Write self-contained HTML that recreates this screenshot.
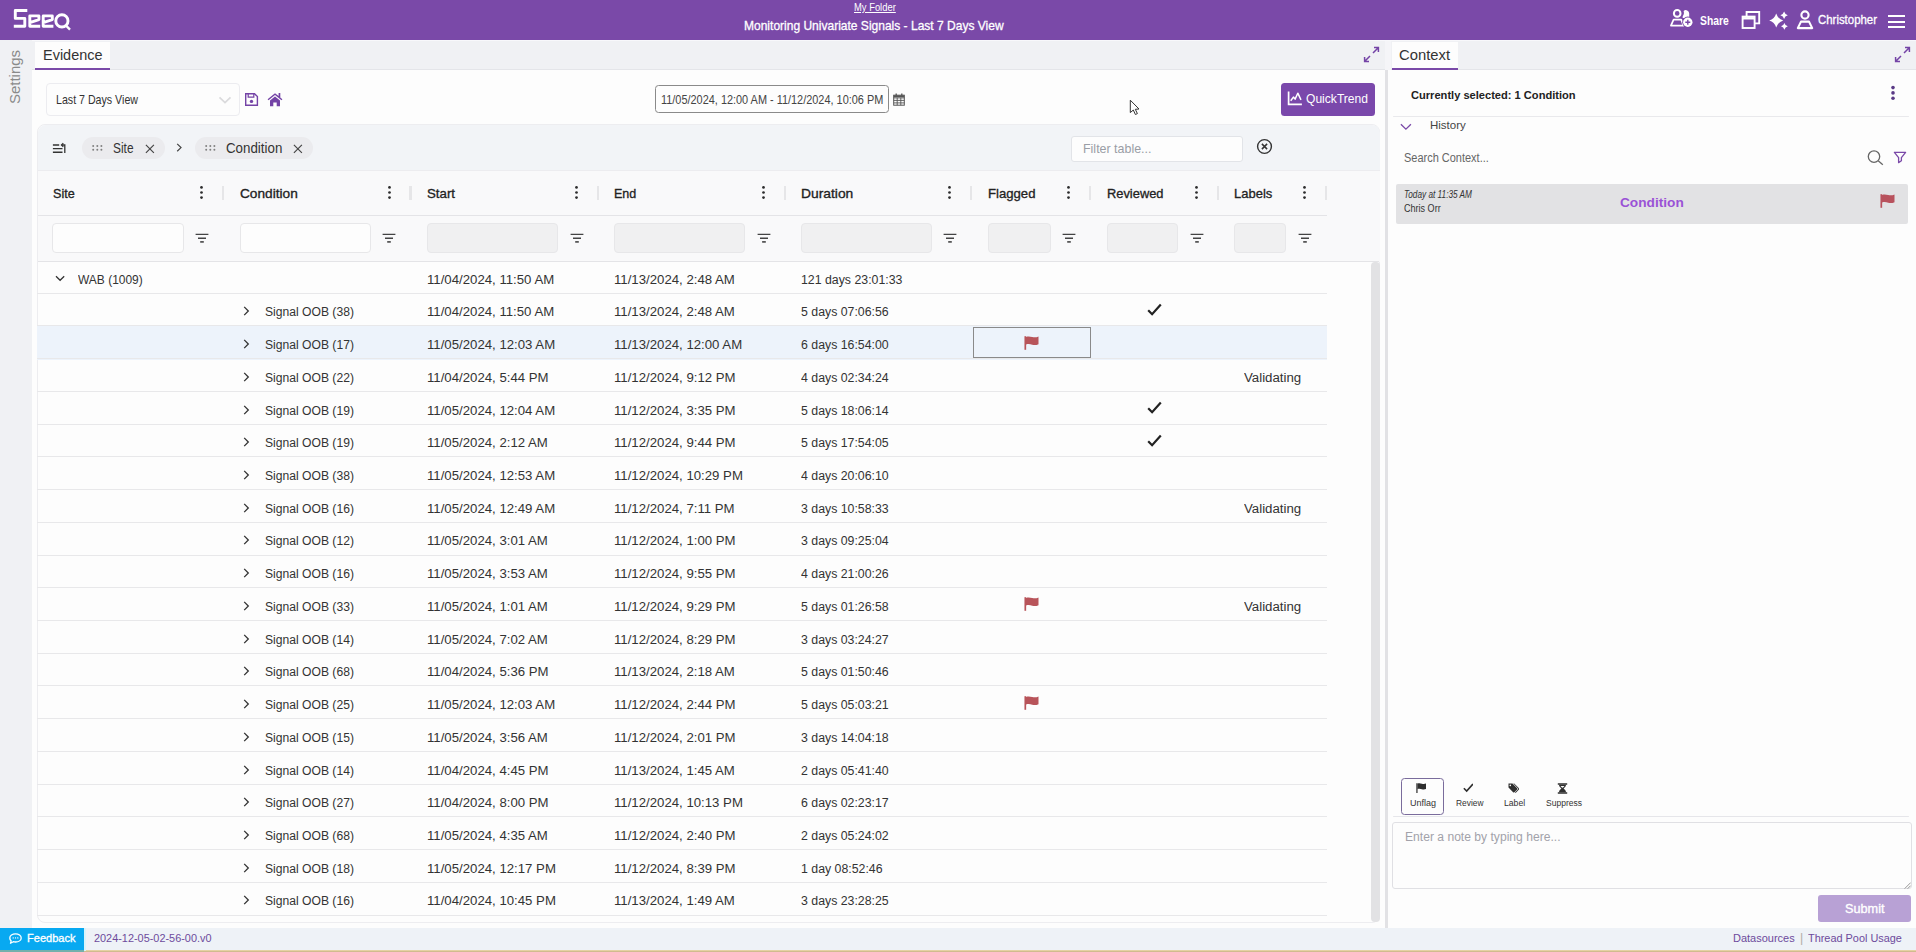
<!DOCTYPE html>
<html><head><meta charset="utf-8"><title>Seeq</title>
<style>
*{box-sizing:border-box;margin:0;padding:0}
html,body{width:1916px;height:952px;overflow:hidden;background:#f0f1f4;font-family:"Liberation Sans",sans-serif;color:#333;font-size:13px}
.a{position:absolute;display:block}
.x{position:absolute;display:inline-block;white-space:nowrap;transform-origin:0 50%}
#top{position:absolute;left:0;top:0;width:1916px;height:40px;background:#7a49a8}
#tabs{position:absolute;left:32px;top:40px;width:1884px;height:30px;background:#f0f1f4;border-bottom:1px solid #e4e5e9;border-top:1px solid #f8f8fb}
.tab{position:absolute;top:42.400px;height:27.300px;background:#fdfdfd;border-bottom:2.200px solid #7a49a8}
#ev{position:absolute;left:32px;top:70px;width:1354px;height:857.500px;background:#fdfdfd}
#split{position:absolute;left:1385px;top:70px;width:2.800px;height:857.500px;background:#e2e2e5}
#ctx{position:absolute;left:1388px;top:70px;width:528px;height:857.500px;background:#fdfdfd}
#foot{position:absolute;left:0;top:927.500px;width:1916px;height:24.500px;background:#eef2f7}
#tbl{position:absolute;left:37px;top:124px;width:1343px;height:798.500px;border:1px solid #ededf0;border-radius:8px;background:#fdfdfd}
#tbar{position:absolute;left:37.500px;top:124.500px;width:1342px;height:45.500px;background:#f2f4f7;border-radius:8px 8px 0 0}
#thead{position:absolute;left:38px;top:170px;width:1341.500px;height:91.500px;background:#f9f9fa;border-top:1px solid #ececef}
#hline{position:absolute;left:38px;top:214.800px;width:1289px;height:1px;background:#e4e4e7}
#fline{position:absolute;left:38px;top:261px;width:1341px;height:1px;background:#e4e4e7}
.chip{position:absolute;top:136.500px;height:22.500px;border-radius:12px;background:#ebebee}
</style></head><body>
<div id="top"></div>
<svg class="a" style="left:0;top:0" width="80" height="40" viewBox="0 0 80 40" fill="none" stroke="#fff" stroke-width="2.9" stroke-linejoin="round" stroke-linecap="butt">
<path d="M27.3 10.5H15.3V18.4H24.8V26.2H13.8"/>
<path d="M29.8 22.6L38.9 19.6V15.9H29.8V26.2H40.2"/>
<path d="M43.2 22.6L52.3 19.6V15.9H43.2V26.2H53.4"/>
<circle cx="61.9" cy="20.9" r="6.1"/>
<path d="M65.5 25.2L70 29.6" stroke-width="2.4"/>
</svg>
<span class="x" style="left:854.4px;top:3.04px;font-size:10px;line-height:10px;color:#fff;transform:scaleX(0.9403);text-decoration:underline;">My Folder</span>
<span class="x" style="left:744.2px;top:19.43px;font-size:13.2px;line-height:13.2px;color:#fff;-webkit-text-stroke:0.3px #fff;transform:scaleX(0.9111);">Monitoring Univariate Signals - Last 7 Days View</span>
<svg class="a" style="left:1669px;top:8px" width="26" height="20" viewBox="0 0 26 20" fill="none" stroke="#fff" stroke-width="1.7">
<circle cx="8.2" cy="5.4" r="3.3" stroke-width="2"/>
<path d="M4.6 11.6h7.6l2.3 6H1.9z" stroke-linejoin="round"/>
<path d="M14.6 3.1a3.3 3.3 0 0 1 5.6 2.4v4.5h-6.5v-1.8c1.2-1.4 1.6-3.2.9-5.1z" fill="#fff" stroke="none"/>
<circle cx="18.8" cy="14.2" r="5.6" fill="#7a49a8" stroke="none"/><circle cx="18.8" cy="14.2" r="4.7" fill="#fff" stroke="none"/>
<path d="M18.8 11.7v5M16.3 14.2h5" stroke="#7a49a8" stroke-width="1.4"/>
</svg>
<span class="x" style="left:1699.9px;top:14.67px;font-size:12.2px;line-height:12.2px;color:#fff;font-weight:bold;transform:scaleX(0.8494);">Share</span>
<svg class="a" style="left:1741px;top:10px" width="20" height="20" viewBox="0 0 20 20" fill="none" stroke="#fff" stroke-width="1.9">
<path d="M5.6 6.4V2h12.6v11.4h-4.6"/>
<rect x="1.6" y="6.6" width="12" height="11.4"/>
<path d="M1.6 8.3h12" stroke-width="2.4"/>
</svg>
<svg class="a" style="left:1768px;top:11px" width="21" height="20" viewBox="0 0 21 20" fill="#fff"><path d="M8.2 2.5Q9.88 7.82 15.2 9.5Q9.88 11.18 8.2 16.5Q6.52 11.18 1.2 9.5Q6.52 7.82 8.2 2.5Z"/><path d="M16.1 0.6Q16.91 3.49 19.8 4.3Q16.91 5.11 16.1 8Q15.29 5.11 12.4 4.3Q15.29 3.49 16.1 0.6Z"/><path d="M16.4 11.9Q17.15 14.55 19.8 15.3Q17.15 16.05 16.4 18.7Q15.65 16.05 13 15.3Q15.65 14.55 16.4 11.9Z"/></svg>
<svg class="a" style="left:1796px;top:9px" width="18" height="21" viewBox="0 0 18 21" fill="none" stroke="#fff" stroke-width="2.1">
<circle cx="9" cy="6" r="3.6"/>
<path d="M5 12.6h8l3.2 6.5H1.8z" stroke-linejoin="round"/>
</svg>
<span class="x" style="left:1818.1px;top:14.2px;font-size:12.4px;line-height:12.4px;color:#fff;-webkit-text-stroke:0.3px #fff;transform:scaleX(0.9205);">Christopher</span>
<div class="a" style="left:1888.2px;top:15px;width:17px;height:2.2px;background:#fff"></div><div class="a" style="left:1888.2px;top:20.6px;width:17px;height:2.2px;background:#fff"></div><div class="a" style="left:1888.2px;top:26.2px;width:17px;height:2.2px;background:#fff"></div>
<div id="tabs"></div>
<div id="ev"></div><div id="ctx"></div><div id="split"></div>
<div class="tab" style="left:35px;width:75px"></div>
<span class="x" style="left:43.3px;top:47.3px;font-size:15px;line-height:15px;color:#333;transform:scaleX(0.9642);">Evidence</span>
<div class="a" style="left:1385px;top:41px;width:5.5px;height:28.5px;background:#f5f5f8"></div>
<div class="tab" style="left:1391.7px;width:66.3px"></div>
<span class="x" style="left:1399px;top:47.3px;font-size:15px;line-height:15px;color:#333;transform:scaleX(0.9866);">Context</span>
<svg class="a" style="left:1363px;top:46px" width="17" height="17" viewBox="0 0 17 17" fill="none" stroke="#7443a6" stroke-width="1.5"><path d="M11 1.6h4.4V6M15.2 1.8L10 7M6 15.4H1.6V11M1.8 15.2L7 10"/></svg>
<svg class="a" style="left:1894px;top:46px" width="17" height="17" viewBox="0 0 17 17" fill="none" stroke="#7443a6" stroke-width="1.5"><path d="M11 1.6h4.4V6M15.2 1.8L10 7M6 15.4H1.6V11M1.8 15.2L7 10"/></svg>
<span class="x" style="left:13.6px;top:77.3px;font-size:15px;line-height:15px;color:#8a8a8a;transform-origin:50% 50%;transform:translate(-50%,-50%) rotate(-90deg)">Settings</span>
<div class="a" style="left:46px;top:83px;width:194px;height:33px;border:1px solid #ececf0;border-radius:4px;background:#fdfdfd"></div>
<span class="x" style="left:56.3px;top:94.06px;font-size:12.8px;line-height:12.8px;color:#333;transform:scaleX(0.8312);">Last 7 Days View</span>
<svg class="a" style="left:218px;top:96px" width="14" height="8" viewBox="0 0 14 8" fill="none" stroke="#dadadc" stroke-width="1.7"><path d="M1.5 1.3L7 6.5L12.5 1.3"/></svg>
<svg class="a" style="left:244px;top:92px" width="15" height="15" viewBox="0 0 15 15" fill="none" stroke="#7443a6" stroke-width="1.4"><path d="M1.7 1.7h8.8l2.9 2.9v8.7H1.7z" stroke-linejoin="miter"/><path d="M4.2 1.7v3.4h5.6V1.7" stroke-width="1.2"/><circle cx="7.5" cy="9.4" r="1.7" fill="#7443a6" stroke="none"/></svg>
<svg class="a" style="left:267px;top:91.5px" width="16" height="15" viewBox="0 0 16 15" fill="#7443a6"><path d="M8 1.2L.6 7.2l.9 1.1L8 3.1l6.5 5.2.9-1.1-2.1-1.7V.9h-1.7v3.2z"/><path d="M3 8.5L8 4.5l5 4v5.8H9.7v-3.9H6.3v3.9H3z"/></svg>
<div class="a" style="left:655px;top:85.3px;width:234px;height:27.8px;border:1px solid #8a8a8a;border-radius:3.5px;background:#fdfdfd"></div>
<span class="x" style="left:660.5px;top:93.87px;font-size:12.2px;line-height:12.2px;color:#444;transform:scaleX(0.8955);">11/05/2024, 12:00 AM - 11/12/2024, 10:06 PM</span>
<svg class="a" style="left:893px;top:92.6px" width="12" height="13" viewBox="0 0 12 13" fill="none" stroke="#555" stroke-width="1"><rect x=".700" y="2.2" width="10.6" height="10" /><path d="M.7 4.9h10.6M.7 7.4h10.6M.7 9.9h10.6M4.2 4.9v7.3M7.8 4.9v7.3" stroke-width=".9"/><path d="M.7 3.3h10.6" stroke-width="2"/><path d="M3.2.400v2.4M8.8.400v2.4" stroke-width="1.3"/></svg>
<div class="a" style="left:1281px;top:83px;width:94px;height:33px;background:#7a48ab;border-radius:3.5px"></div>
<svg class="a" style="left:1287px;top:90.5px" width="16" height="15" viewBox="0 0 16 15" fill="none" stroke="#fff" stroke-width="1.7"><path d="M1.6.600v12.7h13.3"/><path d="M3.7 9.8l2.7-3.7 1.7 2 2.7-5.9 3.2 6.6" stroke-width="1.5" stroke-linejoin="round"/></svg>
<span class="x" style="left:1305.6px;top:92.44px;font-size:13.3px;line-height:13.3px;color:#fff;transform:scaleX(0.9085);">QuickTrend</span>
<div id="tbl"></div><div id="tbar"></div><div id="thead"></div><div id="hline"></div><div id="fline"></div>
<svg class="a" style="left:52px;top:142px" width="15" height="12" viewBox="0 0 15 12" fill="none" stroke="#333" stroke-width="1.35"><path d="M.9 3h6.3M.9 6.6h9.6M.9 10.2h9.6"/><path d="M12.8 10.9V3H9.7" stroke-width="1.3"/><path d="M11.3 1.1L9.4 3l1.9 1.9" stroke-width="1.2"/></svg>
<div class="chip" style="left:82px;width:83px"></div>
<svg class="a" style="left:92px;top:144.5px" width="11" height="6" viewBox="0 0 11 6" fill="#808080"><circle cx="1.2" cy="1.1" r="1"/><circle cx="5.3" cy="1.1" r="1"/><circle cx="9.4" cy="1.1" r="1"/><circle cx="1.2" cy="4.8" r="1"/><circle cx="5.3" cy="4.8" r="1"/><circle cx="9.4" cy="4.8" r="1"/></svg>
<span class="x" style="left:113.3px;top:140.9px;font-size:14.3px;line-height:14.3px;color:#333;transform:scaleX(0.8319);">Site</span>
<svg class="a" style="left:144.8px;top:143.5px" width="10" height="10" viewBox="0 0 10 10" fill="none" stroke="#444" stroke-width="1.15"><path d="M.9.9l8 8M8.9.900L.9 8.9"/></svg>
<svg class="a" style="left:176.3px;top:143.3px" width="7" height="10" viewBox="0 0 7 10" fill="none" stroke="#444" stroke-width="1.2"><path d="M1.2.9l3.8 3.7L1.2 8.3"/></svg>
<div class="chip" style="left:195px;width:118px"></div>
<svg class="a" style="left:204.8px;top:144.5px" width="11" height="6" viewBox="0 0 11 6" fill="#808080"><circle cx="1.2" cy="1.1" r="1"/><circle cx="5.3" cy="1.1" r="1"/><circle cx="9.4" cy="1.1" r="1"/><circle cx="1.2" cy="4.8" r="1"/><circle cx="5.3" cy="4.8" r="1"/><circle cx="9.4" cy="4.8" r="1"/></svg>
<span class="x" style="left:226px;top:140.9px;font-size:14.3px;line-height:14.3px;color:#333;transform:scaleX(0.9318);">Condition</span>
<svg class="a" style="left:292.5px;top:143.5px" width="10" height="10" viewBox="0 0 10 10" fill="none" stroke="#444" stroke-width="1.15"><path d="M.9.9l8 8M8.9.900L.9 8.9"/></svg>
<div class="a" style="left:1071px;top:135.5px;width:172px;height:26px;border:1px solid #e2e4e8;border-radius:3px;background:#fdfdfd"></div>
<span class="x" style="left:1083px;top:142.16px;font-size:13.4px;line-height:13.4px;color:#9a9ea6;transform:scaleX(0.9291);">Filter table...</span>
<svg class="a" style="left:1256px;top:138px" width="17" height="17" viewBox="0 0 17 17" fill="none" stroke="#333" stroke-width="1.4"><circle cx="8.5" cy="8.5" r="6.9"/><path d="M5.9 5.9l5.2 5.2M11.1 5.9l-5.2 5.2" stroke-width="1.5"/></svg>
<span class="x" style="left:52.5px;top:187.09px;font-size:13.6px;line-height:13.6px;color:#222;-webkit-text-stroke:0.33px #222;transform:scaleX(0.926);">Site</span>
<svg class="a" style="left:199.3px;top:185.4px" width="5" height="15" viewBox="0 0 5 15" fill="#2c2c2c"><circle cx="2.5" cy="2.4" r="1.35"/><circle cx="2.5" cy="7.5" r="1.35"/><circle cx="2.5" cy="12.6" r="1.35"/></svg>
<div class="a" style="left:222.2px;top:186px;width:2.2px;height:14px;background:#e6e6e8"></div>
<div class="a" style="left:52.4px;top:223px;width:131.2px;height:30px;border:1px solid #e7e7e9;border-radius:4px;background:#fdfdfd"></div>
<svg class="a" style="left:195.2px;top:232.5px" width="14" height="11" viewBox="0 0 14 11" fill="none" stroke="#444" stroke-width="1.4"><path d="M.6 1.4h12.8M3 5.2h8"/><path d="M5.2 8.9h3.6" stroke-width="1.6"/></svg>
<span class="x" style="left:239.7px;top:187.09px;font-size:13.6px;line-height:13.6px;color:#222;-webkit-text-stroke:0.33px #222;transform:scaleX(1.0059);">Condition</span>
<svg class="a" style="left:386.5px;top:185.4px" width="5" height="15" viewBox="0 0 5 15" fill="#2c2c2c"><circle cx="2.5" cy="2.4" r="1.35"/><circle cx="2.5" cy="7.5" r="1.35"/><circle cx="2.5" cy="12.6" r="1.35"/></svg>
<div class="a" style="left:409.4px;top:186px;width:2.2px;height:14px;background:#e6e6e8"></div>
<div class="a" style="left:239.6px;top:223px;width:131.2px;height:30px;border:1px solid #e7e7e9;border-radius:4px;background:#fdfdfd"></div>
<svg class="a" style="left:382.4px;top:232.5px" width="14" height="11" viewBox="0 0 14 11" fill="none" stroke="#444" stroke-width="1.4"><path d="M.6 1.4h12.8M3 5.2h8"/><path d="M5.2 8.9h3.6" stroke-width="1.6"/></svg>
<span class="x" style="left:426.9px;top:187.09px;font-size:13.6px;line-height:13.6px;color:#222;-webkit-text-stroke:0.33px #222;transform:scaleX(0.9749);">Start</span>
<svg class="a" style="left:573.7px;top:185.4px" width="5" height="15" viewBox="0 0 5 15" fill="#2c2c2c"><circle cx="2.5" cy="2.4" r="1.35"/><circle cx="2.5" cy="7.5" r="1.35"/><circle cx="2.5" cy="12.6" r="1.35"/></svg>
<div class="a" style="left:596.6px;top:186px;width:2.2px;height:14px;background:#e6e6e8"></div>
<div class="a" style="left:426.8px;top:223px;width:131.2px;height:30px;border:1px solid #e7e7e9;border-radius:4px;background:#f0f0f1"></div>
<svg class="a" style="left:569.6px;top:232.5px" width="14" height="11" viewBox="0 0 14 11" fill="none" stroke="#444" stroke-width="1.4"><path d="M.6 1.4h12.8M3 5.2h8"/><path d="M5.2 8.9h3.6" stroke-width="1.6"/></svg>
<span class="x" style="left:614.1px;top:187.09px;font-size:13.6px;line-height:13.6px;color:#222;-webkit-text-stroke:0.33px #222;transform:scaleX(0.9215);">End</span>
<svg class="a" style="left:760.9px;top:185.4px" width="5" height="15" viewBox="0 0 5 15" fill="#2c2c2c"><circle cx="2.5" cy="2.4" r="1.35"/><circle cx="2.5" cy="7.5" r="1.35"/><circle cx="2.5" cy="12.6" r="1.35"/></svg>
<div class="a" style="left:783.8px;top:186px;width:2.2px;height:14px;background:#e6e6e8"></div>
<div class="a" style="left:614px;top:223px;width:131.2px;height:30px;border:1px solid #e7e7e9;border-radius:4px;background:#f0f0f1"></div>
<svg class="a" style="left:756.8px;top:232.5px" width="14" height="11" viewBox="0 0 14 11" fill="none" stroke="#444" stroke-width="1.4"><path d="M.6 1.4h12.8M3 5.2h8"/><path d="M5.2 8.9h3.6" stroke-width="1.6"/></svg>
<span class="x" style="left:801.3px;top:187.09px;font-size:13.6px;line-height:13.6px;color:#222;-webkit-text-stroke:0.33px #222;transform:scaleX(1.0174);">Duration</span>
<svg class="a" style="left:947.4px;top:185.4px" width="5" height="15" viewBox="0 0 5 15" fill="#2c2c2c"><circle cx="2.5" cy="2.4" r="1.35"/><circle cx="2.5" cy="7.5" r="1.35"/><circle cx="2.5" cy="12.6" r="1.35"/></svg>
<div class="a" style="left:970.3px;top:186px;width:2.2px;height:14px;background:#e6e6e8"></div>
<div class="a" style="left:801.2px;top:223px;width:130.5px;height:30px;border:1px solid #e7e7e9;border-radius:4px;background:#f0f0f1"></div>
<svg class="a" style="left:943.3px;top:232.5px" width="14" height="11" viewBox="0 0 14 11" fill="none" stroke="#444" stroke-width="1.4"><path d="M.6 1.4h12.8M3 5.2h8"/><path d="M5.2 8.9h3.6" stroke-width="1.6"/></svg>
<span class="x" style="left:987.8px;top:187.09px;font-size:13.6px;line-height:13.6px;color:#222;-webkit-text-stroke:0.33px #222;transform:scaleX(0.9665);">Flagged</span>
<svg class="a" style="left:1066.4px;top:185.4px" width="5" height="15" viewBox="0 0 5 15" fill="#2c2c2c"><circle cx="2.5" cy="2.4" r="1.35"/><circle cx="2.5" cy="7.5" r="1.35"/><circle cx="2.5" cy="12.6" r="1.35"/></svg>
<div class="a" style="left:1089.3px;top:186px;width:2.2px;height:14px;background:#e6e6e8"></div>
<div class="a" style="left:987.7px;top:223px;width:63px;height:30px;border:1px solid #e7e7e9;border-radius:4px;background:#f0f0f1"></div>
<svg class="a" style="left:1062.3px;top:232.5px" width="14" height="11" viewBox="0 0 14 11" fill="none" stroke="#444" stroke-width="1.4"><path d="M.6 1.4h12.8M3 5.2h8"/><path d="M5.2 8.9h3.6" stroke-width="1.6"/></svg>
<span class="x" style="left:1106.8px;top:187.09px;font-size:13.6px;line-height:13.6px;color:#222;-webkit-text-stroke:0.33px #222;transform:scaleX(0.9461);">Reviewed</span>
<svg class="a" style="left:1193.6px;top:185.4px" width="5" height="15" viewBox="0 0 5 15" fill="#2c2c2c"><circle cx="2.5" cy="2.4" r="1.35"/><circle cx="2.5" cy="7.5" r="1.35"/><circle cx="2.5" cy="12.6" r="1.35"/></svg>
<div class="a" style="left:1216.5px;top:186px;width:2.2px;height:14px;background:#e6e6e8"></div>
<div class="a" style="left:1106.7px;top:223px;width:71.2px;height:30px;border:1px solid #e7e7e9;border-radius:4px;background:#f0f0f1"></div>
<svg class="a" style="left:1189.5px;top:232.5px" width="14" height="11" viewBox="0 0 14 11" fill="none" stroke="#444" stroke-width="1.4"><path d="M.6 1.4h12.8M3 5.2h8"/><path d="M5.2 8.9h3.6" stroke-width="1.6"/></svg>
<span class="x" style="left:1234px;top:187.09px;font-size:13.6px;line-height:13.6px;color:#222;-webkit-text-stroke:0.33px #222;transform:scaleX(0.9557);">Labels</span>
<svg class="a" style="left:1302.1px;top:185.4px" width="5" height="15" viewBox="0 0 5 15" fill="#2c2c2c"><circle cx="2.5" cy="2.4" r="1.35"/><circle cx="2.5" cy="7.5" r="1.35"/><circle cx="2.5" cy="12.6" r="1.35"/></svg>
<div class="a" style="left:1325px;top:186px;width:2.2px;height:14px;background:#e6e6e8"></div>
<div class="a" style="left:1233.9px;top:223px;width:52.5px;height:30px;border:1px solid #e7e7e9;border-radius:4px;background:#f0f0f1"></div>
<svg class="a" style="left:1298px;top:232.5px" width="14" height="11" viewBox="0 0 14 11" fill="none" stroke="#444" stroke-width="1.4"><path d="M.6 1.4h12.8M3 5.2h8"/><path d="M5.2 8.9h3.6" stroke-width="1.6"/></svg>
<div id="rows">
<div class="a" style="left:37px;top:292.73px;width:1290px;height:1px;background:#e8e8ea"></div>
<svg class="a" style="left:54.5px;top:274.9px" width="10" height="7" viewBox="0 0 10 7" fill="none" stroke="#333" stroke-width="1.25"><path d="M1 1.2l4.1 4.1L9.2 1.2"/></svg>
<span class="x" style="left:78.2px;top:272.6px;font-size:13.7px;line-height:13.7px;color:#333;transform:scaleX(0.8744);">WAB (1009)</span>
<span class="x" style="left:427px;top:272.6px;font-size:13.7px;line-height:13.7px;color:#333;transform:scaleX(0.9642);">11/04/2024, 11:50 AM</span>
<span class="x" style="left:614.2px;top:272.6px;font-size:13.7px;line-height:13.7px;color:#333;transform:scaleX(0.9642);">11/13/2024, 2:48 AM</span>
<span class="x" style="left:800.8px;top:272.6px;font-size:13.7px;line-height:13.7px;color:#333;transform:scaleX(0.9005);">121 days 23:01:33</span>
<div class="a" style="left:37px;top:325.46px;width:1290px;height:1px;background:#e8e8ea"></div>
<svg class="a" style="left:243px;top:306.33px" width="7" height="10" viewBox="0 0 7 10" fill="none" stroke="#333" stroke-width="1.3"><path d="M1.2.9l4.1 4.1L1.2 9.1"/></svg>
<span class="x" style="left:265.2px;top:305.33px;font-size:13.7px;line-height:13.7px;color:#333;transform:scaleX(0.8855);">Signal OOB (38)</span>
<span class="x" style="left:427px;top:305.33px;font-size:13.7px;line-height:13.7px;color:#333;transform:scaleX(0.9642);">11/04/2024, 11:50 AM</span>
<span class="x" style="left:614.2px;top:305.33px;font-size:13.7px;line-height:13.7px;color:#333;transform:scaleX(0.9642);">11/13/2024, 2:48 AM</span>
<span class="x" style="left:800.8px;top:305.33px;font-size:13.7px;line-height:13.7px;color:#333;transform:scaleX(0.9005);">5 days 07:06:56</span>
<svg class="a" style="left:1146.7px;top:302.7px" width="15" height="13" viewBox="0 0 15 13"><path d="M1.2 7.2l3.9 4L13.8 1.4" stroke="#222" stroke-width="2.2" fill="none"/></svg>
<div class="a" style="left:37px;top:326.46px;width:1290px;height:33.53px;background:#edf3fb"></div>
<div class="a" style="left:37px;top:358.19px;width:1290px;height:1px;background:#e8e8ea"></div>
<svg class="a" style="left:243px;top:339.06px" width="7" height="10" viewBox="0 0 7 10" fill="none" stroke="#333" stroke-width="1.3"><path d="M1.2.9l4.1 4.1L1.2 9.1"/></svg>
<span class="x" style="left:265.2px;top:338.06px;font-size:13.7px;line-height:13.7px;color:#333;transform:scaleX(0.8855);">Signal OOB (17)</span>
<span class="x" style="left:427px;top:338.06px;font-size:13.7px;line-height:13.7px;color:#333;transform:scaleX(0.9642);">11/05/2024, 12:03 AM</span>
<span class="x" style="left:614.2px;top:338.06px;font-size:13.7px;line-height:13.7px;color:#333;transform:scaleX(0.9642);">11/13/2024, 12:00 AM</span>
<span class="x" style="left:800.8px;top:338.06px;font-size:13.7px;line-height:13.7px;color:#333;transform:scaleX(0.9005);">6 days 16:54:00</span>
<div class="a" style="left:973px;top:326.96px;width:118px;height:31.5px;border:1px solid #8a8a8a"></div>
<svg class="a" style="left:1024.3px;top:335.5px" width="15" height="14" viewBox="0 0 15 14"><path d="M1.3 .2v13.6" stroke="#b8545a" stroke-width="1.7" fill="none"/><path d="M2 .9c2.3-.9 4.2-.4 6.2.1s3.9.6 6.3-.5v7.7c-2.4 1.1-4.3 1-6.3.500s-3.9-1-6.2-.1z" fill="#b8545a"/></svg>
<div class="a" style="left:37px;top:390.92px;width:1290px;height:1px;background:#e8e8ea"></div>
<svg class="a" style="left:243px;top:371.79px" width="7" height="10" viewBox="0 0 7 10" fill="none" stroke="#333" stroke-width="1.3"><path d="M1.2.9l4.1 4.1L1.2 9.1"/></svg>
<span class="x" style="left:265.2px;top:370.79px;font-size:13.7px;line-height:13.7px;color:#333;transform:scaleX(0.8855);">Signal OOB (22)</span>
<span class="x" style="left:427px;top:370.79px;font-size:13.7px;line-height:13.7px;color:#333;transform:scaleX(0.9642);">11/04/2024, 5:44 PM</span>
<span class="x" style="left:614.2px;top:370.79px;font-size:13.7px;line-height:13.7px;color:#333;transform:scaleX(0.9642);">11/12/2024, 9:12 PM</span>
<span class="x" style="left:800.8px;top:370.79px;font-size:13.7px;line-height:13.7px;color:#333;transform:scaleX(0.9005);">4 days 02:34:24</span>
<span class="x" style="left:1244.2px;top:370.79px;font-size:13.7px;line-height:13.7px;color:#333;transform:scaleX(0.9686);">Validating</span>
<div class="a" style="left:37px;top:423.65px;width:1290px;height:1px;background:#e8e8ea"></div>
<svg class="a" style="left:243px;top:404.52px" width="7" height="10" viewBox="0 0 7 10" fill="none" stroke="#333" stroke-width="1.3"><path d="M1.2.9l4.1 4.1L1.2 9.1"/></svg>
<span class="x" style="left:265.2px;top:403.52px;font-size:13.7px;line-height:13.7px;color:#333;transform:scaleX(0.8855);">Signal OOB (19)</span>
<span class="x" style="left:427px;top:403.52px;font-size:13.7px;line-height:13.7px;color:#333;transform:scaleX(0.9642);">11/05/2024, 12:04 AM</span>
<span class="x" style="left:614.2px;top:403.52px;font-size:13.7px;line-height:13.7px;color:#333;transform:scaleX(0.9642);">11/12/2024, 3:35 PM</span>
<span class="x" style="left:800.8px;top:403.52px;font-size:13.7px;line-height:13.7px;color:#333;transform:scaleX(0.9005);">5 days 18:06:14</span>
<svg class="a" style="left:1146.7px;top:400.9px" width="15" height="13" viewBox="0 0 15 13"><path d="M1.2 7.2l3.9 4L13.8 1.4" stroke="#222" stroke-width="2.2" fill="none"/></svg>
<div class="a" style="left:37px;top:456.38px;width:1290px;height:1px;background:#e8e8ea"></div>
<svg class="a" style="left:243px;top:437.25px" width="7" height="10" viewBox="0 0 7 10" fill="none" stroke="#333" stroke-width="1.3"><path d="M1.2.9l4.1 4.1L1.2 9.1"/></svg>
<span class="x" style="left:265.2px;top:436.25px;font-size:13.7px;line-height:13.7px;color:#333;transform:scaleX(0.8855);">Signal OOB (19)</span>
<span class="x" style="left:427px;top:436.25px;font-size:13.7px;line-height:13.7px;color:#333;transform:scaleX(0.9642);">11/05/2024, 2:12 AM</span>
<span class="x" style="left:614.2px;top:436.25px;font-size:13.7px;line-height:13.7px;color:#333;transform:scaleX(0.9642);">11/12/2024, 9:44 PM</span>
<span class="x" style="left:800.8px;top:436.25px;font-size:13.7px;line-height:13.7px;color:#333;transform:scaleX(0.9005);">5 days 17:54:05</span>
<svg class="a" style="left:1146.7px;top:433.6px" width="15" height="13" viewBox="0 0 15 13"><path d="M1.2 7.2l3.9 4L13.8 1.4" stroke="#222" stroke-width="2.2" fill="none"/></svg>
<div class="a" style="left:37px;top:489.11px;width:1290px;height:1px;background:#e8e8ea"></div>
<svg class="a" style="left:243px;top:469.98px" width="7" height="10" viewBox="0 0 7 10" fill="none" stroke="#333" stroke-width="1.3"><path d="M1.2.9l4.1 4.1L1.2 9.1"/></svg>
<span class="x" style="left:265.2px;top:468.98px;font-size:13.7px;line-height:13.7px;color:#333;transform:scaleX(0.8855);">Signal OOB (38)</span>
<span class="x" style="left:427px;top:468.98px;font-size:13.7px;line-height:13.7px;color:#333;transform:scaleX(0.9642);">11/05/2024, 12:53 AM</span>
<span class="x" style="left:614.2px;top:468.98px;font-size:13.7px;line-height:13.7px;color:#333;transform:scaleX(0.9642);">11/12/2024, 10:29 PM</span>
<span class="x" style="left:800.8px;top:468.98px;font-size:13.7px;line-height:13.7px;color:#333;transform:scaleX(0.9005);">4 days 20:06:10</span>
<div class="a" style="left:37px;top:521.84px;width:1290px;height:1px;background:#e8e8ea"></div>
<svg class="a" style="left:243px;top:502.71px" width="7" height="10" viewBox="0 0 7 10" fill="none" stroke="#333" stroke-width="1.3"><path d="M1.2.9l4.1 4.1L1.2 9.1"/></svg>
<span class="x" style="left:265.2px;top:501.71px;font-size:13.7px;line-height:13.7px;color:#333;transform:scaleX(0.8855);">Signal OOB (16)</span>
<span class="x" style="left:427px;top:501.71px;font-size:13.7px;line-height:13.7px;color:#333;transform:scaleX(0.9642);">11/05/2024, 12:49 AM</span>
<span class="x" style="left:614.2px;top:501.71px;font-size:13.7px;line-height:13.7px;color:#333;transform:scaleX(0.9642);">11/12/2024, 7:11 PM</span>
<span class="x" style="left:800.8px;top:501.71px;font-size:13.7px;line-height:13.7px;color:#333;transform:scaleX(0.9005);">3 days 10:58:33</span>
<span class="x" style="left:1244.2px;top:501.71px;font-size:13.7px;line-height:13.7px;color:#333;transform:scaleX(0.9686);">Validating</span>
<div class="a" style="left:37px;top:554.57px;width:1290px;height:1px;background:#e8e8ea"></div>
<svg class="a" style="left:243px;top:535.44px" width="7" height="10" viewBox="0 0 7 10" fill="none" stroke="#333" stroke-width="1.3"><path d="M1.2.9l4.1 4.1L1.2 9.1"/></svg>
<span class="x" style="left:265.2px;top:534.44px;font-size:13.7px;line-height:13.7px;color:#333;transform:scaleX(0.8855);">Signal OOB (12)</span>
<span class="x" style="left:427px;top:534.44px;font-size:13.7px;line-height:13.7px;color:#333;transform:scaleX(0.9642);">11/05/2024, 3:01 AM</span>
<span class="x" style="left:614.2px;top:534.44px;font-size:13.7px;line-height:13.7px;color:#333;transform:scaleX(0.9642);">11/12/2024, 1:00 PM</span>
<span class="x" style="left:800.8px;top:534.44px;font-size:13.7px;line-height:13.7px;color:#333;transform:scaleX(0.9005);">3 days 09:25:04</span>
<div class="a" style="left:37px;top:587.3px;width:1290px;height:1px;background:#e8e8ea"></div>
<svg class="a" style="left:243px;top:568.17px" width="7" height="10" viewBox="0 0 7 10" fill="none" stroke="#333" stroke-width="1.3"><path d="M1.2.9l4.1 4.1L1.2 9.1"/></svg>
<span class="x" style="left:265.2px;top:567.17px;font-size:13.7px;line-height:13.7px;color:#333;transform:scaleX(0.8855);">Signal OOB (16)</span>
<span class="x" style="left:427px;top:567.17px;font-size:13.7px;line-height:13.7px;color:#333;transform:scaleX(0.9642);">11/05/2024, 3:53 AM</span>
<span class="x" style="left:614.2px;top:567.17px;font-size:13.7px;line-height:13.7px;color:#333;transform:scaleX(0.9642);">11/12/2024, 9:55 PM</span>
<span class="x" style="left:800.8px;top:567.17px;font-size:13.7px;line-height:13.7px;color:#333;transform:scaleX(0.9005);">4 days 21:00:26</span>
<div class="a" style="left:37px;top:620.03px;width:1290px;height:1px;background:#e8e8ea"></div>
<svg class="a" style="left:243px;top:600.9px" width="7" height="10" viewBox="0 0 7 10" fill="none" stroke="#333" stroke-width="1.3"><path d="M1.2.9l4.1 4.1L1.2 9.1"/></svg>
<span class="x" style="left:265.2px;top:599.9px;font-size:13.7px;line-height:13.7px;color:#333;transform:scaleX(0.8855);">Signal OOB (33)</span>
<span class="x" style="left:427px;top:599.9px;font-size:13.7px;line-height:13.7px;color:#333;transform:scaleX(0.9642);">11/05/2024, 1:01 AM</span>
<span class="x" style="left:614.2px;top:599.9px;font-size:13.7px;line-height:13.7px;color:#333;transform:scaleX(0.9642);">11/12/2024, 9:29 PM</span>
<span class="x" style="left:800.8px;top:599.9px;font-size:13.7px;line-height:13.7px;color:#333;transform:scaleX(0.9005);">5 days 01:26:58</span>
<svg class="a" style="left:1024.3px;top:597.3px" width="15" height="14" viewBox="0 0 15 14"><path d="M1.3 .2v13.6" stroke="#b8545a" stroke-width="1.7" fill="none"/><path d="M2 .9c2.3-.9 4.2-.4 6.2.1s3.9.6 6.3-.5v7.7c-2.4 1.1-4.3 1-6.3.500s-3.9-1-6.2-.1z" fill="#b8545a"/></svg>
<span class="x" style="left:1244.2px;top:599.9px;font-size:13.7px;line-height:13.7px;color:#333;transform:scaleX(0.9686);">Validating</span>
<div class="a" style="left:37px;top:652.76px;width:1290px;height:1px;background:#e8e8ea"></div>
<svg class="a" style="left:243px;top:633.63px" width="7" height="10" viewBox="0 0 7 10" fill="none" stroke="#333" stroke-width="1.3"><path d="M1.2.9l4.1 4.1L1.2 9.1"/></svg>
<span class="x" style="left:265.2px;top:632.63px;font-size:13.7px;line-height:13.7px;color:#333;transform:scaleX(0.8855);">Signal OOB (14)</span>
<span class="x" style="left:427px;top:632.63px;font-size:13.7px;line-height:13.7px;color:#333;transform:scaleX(0.9642);">11/05/2024, 7:02 AM</span>
<span class="x" style="left:614.2px;top:632.63px;font-size:13.7px;line-height:13.7px;color:#333;transform:scaleX(0.9642);">11/12/2024, 8:29 PM</span>
<span class="x" style="left:800.8px;top:632.63px;font-size:13.7px;line-height:13.7px;color:#333;transform:scaleX(0.9005);">3 days 03:24:27</span>
<div class="a" style="left:37px;top:685.49px;width:1290px;height:1px;background:#e8e8ea"></div>
<svg class="a" style="left:243px;top:666.36px" width="7" height="10" viewBox="0 0 7 10" fill="none" stroke="#333" stroke-width="1.3"><path d="M1.2.9l4.1 4.1L1.2 9.1"/></svg>
<span class="x" style="left:265.2px;top:665.36px;font-size:13.7px;line-height:13.7px;color:#333;transform:scaleX(0.8855);">Signal OOB (68)</span>
<span class="x" style="left:427px;top:665.36px;font-size:13.7px;line-height:13.7px;color:#333;transform:scaleX(0.9642);">11/04/2024, 5:36 PM</span>
<span class="x" style="left:614.2px;top:665.36px;font-size:13.7px;line-height:13.7px;color:#333;transform:scaleX(0.9642);">11/13/2024, 2:18 AM</span>
<span class="x" style="left:800.8px;top:665.36px;font-size:13.7px;line-height:13.7px;color:#333;transform:scaleX(0.9005);">5 days 01:50:46</span>
<div class="a" style="left:37px;top:718.22px;width:1290px;height:1px;background:#e8e8ea"></div>
<svg class="a" style="left:243px;top:699.09px" width="7" height="10" viewBox="0 0 7 10" fill="none" stroke="#333" stroke-width="1.3"><path d="M1.2.9l4.1 4.1L1.2 9.1"/></svg>
<span class="x" style="left:265.2px;top:698.09px;font-size:13.7px;line-height:13.7px;color:#333;transform:scaleX(0.8855);">Signal OOB (25)</span>
<span class="x" style="left:427px;top:698.09px;font-size:13.7px;line-height:13.7px;color:#333;transform:scaleX(0.9642);">11/05/2024, 12:03 AM</span>
<span class="x" style="left:614.2px;top:698.09px;font-size:13.7px;line-height:13.7px;color:#333;transform:scaleX(0.9642);">11/12/2024, 2:44 PM</span>
<span class="x" style="left:800.8px;top:698.09px;font-size:13.7px;line-height:13.7px;color:#333;transform:scaleX(0.9005);">5 days 05:03:21</span>
<svg class="a" style="left:1024.3px;top:695.5px" width="15" height="14" viewBox="0 0 15 14"><path d="M1.3 .2v13.6" stroke="#b8545a" stroke-width="1.7" fill="none"/><path d="M2 .9c2.3-.9 4.2-.4 6.2.1s3.9.6 6.3-.5v7.7c-2.4 1.1-4.3 1-6.3.500s-3.9-1-6.2-.1z" fill="#b8545a"/></svg>
<div class="a" style="left:37px;top:750.95px;width:1290px;height:1px;background:#e8e8ea"></div>
<svg class="a" style="left:243px;top:731.82px" width="7" height="10" viewBox="0 0 7 10" fill="none" stroke="#333" stroke-width="1.3"><path d="M1.2.9l4.1 4.1L1.2 9.1"/></svg>
<span class="x" style="left:265.2px;top:730.82px;font-size:13.7px;line-height:13.7px;color:#333;transform:scaleX(0.8855);">Signal OOB (15)</span>
<span class="x" style="left:427px;top:730.82px;font-size:13.7px;line-height:13.7px;color:#333;transform:scaleX(0.9642);">11/05/2024, 3:56 AM</span>
<span class="x" style="left:614.2px;top:730.82px;font-size:13.7px;line-height:13.7px;color:#333;transform:scaleX(0.9642);">11/12/2024, 2:01 PM</span>
<span class="x" style="left:800.8px;top:730.82px;font-size:13.7px;line-height:13.7px;color:#333;transform:scaleX(0.9005);">3 days 14:04:18</span>
<div class="a" style="left:37px;top:783.68px;width:1290px;height:1px;background:#e8e8ea"></div>
<svg class="a" style="left:243px;top:764.55px" width="7" height="10" viewBox="0 0 7 10" fill="none" stroke="#333" stroke-width="1.3"><path d="M1.2.9l4.1 4.1L1.2 9.1"/></svg>
<span class="x" style="left:265.2px;top:763.55px;font-size:13.7px;line-height:13.7px;color:#333;transform:scaleX(0.8855);">Signal OOB (14)</span>
<span class="x" style="left:427px;top:763.55px;font-size:13.7px;line-height:13.7px;color:#333;transform:scaleX(0.9642);">11/04/2024, 4:45 PM</span>
<span class="x" style="left:614.2px;top:763.55px;font-size:13.7px;line-height:13.7px;color:#333;transform:scaleX(0.9642);">11/13/2024, 1:45 AM</span>
<span class="x" style="left:800.8px;top:763.55px;font-size:13.7px;line-height:13.7px;color:#333;transform:scaleX(0.9005);">2 days 05:41:40</span>
<div class="a" style="left:37px;top:816.41px;width:1290px;height:1px;background:#e8e8ea"></div>
<svg class="a" style="left:243px;top:797.28px" width="7" height="10" viewBox="0 0 7 10" fill="none" stroke="#333" stroke-width="1.3"><path d="M1.2.9l4.1 4.1L1.2 9.1"/></svg>
<span class="x" style="left:265.2px;top:796.28px;font-size:13.7px;line-height:13.7px;color:#333;transform:scaleX(0.8855);">Signal OOB (27)</span>
<span class="x" style="left:427px;top:796.28px;font-size:13.7px;line-height:13.7px;color:#333;transform:scaleX(0.9642);">11/04/2024, 8:00 PM</span>
<span class="x" style="left:614.2px;top:796.28px;font-size:13.7px;line-height:13.7px;color:#333;transform:scaleX(0.9642);">11/12/2024, 10:13 PM</span>
<span class="x" style="left:800.8px;top:796.28px;font-size:13.7px;line-height:13.7px;color:#333;transform:scaleX(0.9005);">6 days 02:23:17</span>
<div class="a" style="left:37px;top:849.14px;width:1290px;height:1px;background:#e8e8ea"></div>
<svg class="a" style="left:243px;top:830.01px" width="7" height="10" viewBox="0 0 7 10" fill="none" stroke="#333" stroke-width="1.3"><path d="M1.2.9l4.1 4.1L1.2 9.1"/></svg>
<span class="x" style="left:265.2px;top:829.01px;font-size:13.7px;line-height:13.7px;color:#333;transform:scaleX(0.8855);">Signal OOB (68)</span>
<span class="x" style="left:427px;top:829.01px;font-size:13.7px;line-height:13.7px;color:#333;transform:scaleX(0.9642);">11/05/2024, 4:35 AM</span>
<span class="x" style="left:614.2px;top:829.01px;font-size:13.7px;line-height:13.7px;color:#333;transform:scaleX(0.9642);">11/12/2024, 2:40 PM</span>
<span class="x" style="left:800.8px;top:829.01px;font-size:13.7px;line-height:13.7px;color:#333;transform:scaleX(0.9005);">2 days 05:24:02</span>
<div class="a" style="left:37px;top:881.87px;width:1290px;height:1px;background:#e8e8ea"></div>
<svg class="a" style="left:243px;top:862.74px" width="7" height="10" viewBox="0 0 7 10" fill="none" stroke="#333" stroke-width="1.3"><path d="M1.2.9l4.1 4.1L1.2 9.1"/></svg>
<span class="x" style="left:265.2px;top:861.74px;font-size:13.7px;line-height:13.7px;color:#333;transform:scaleX(0.8855);">Signal OOB (18)</span>
<span class="x" style="left:427px;top:861.74px;font-size:13.7px;line-height:13.7px;color:#333;transform:scaleX(0.9642);">11/05/2024, 12:17 PM</span>
<span class="x" style="left:614.2px;top:861.74px;font-size:13.7px;line-height:13.7px;color:#333;transform:scaleX(0.9642);">11/12/2024, 8:39 PM</span>
<span class="x" style="left:800.8px;top:861.74px;font-size:13.7px;line-height:13.7px;color:#333;transform:scaleX(0.9005);">1 day 08:52:46</span>
<div class="a" style="left:37px;top:914.6px;width:1290px;height:1px;background:#e8e8ea"></div>
<svg class="a" style="left:243px;top:895.47px" width="7" height="10" viewBox="0 0 7 10" fill="none" stroke="#333" stroke-width="1.3"><path d="M1.2.9l4.1 4.1L1.2 9.1"/></svg>
<span class="x" style="left:265.2px;top:894.47px;font-size:13.7px;line-height:13.7px;color:#333;transform:scaleX(0.8855);">Signal OOB (16)</span>
<span class="x" style="left:427px;top:894.47px;font-size:13.7px;line-height:13.7px;color:#333;transform:scaleX(0.9642);">11/04/2024, 10:45 PM</span>
<span class="x" style="left:614.2px;top:894.47px;font-size:13.7px;line-height:13.7px;color:#333;transform:scaleX(0.9642);">11/13/2024, 1:49 AM</span>
<span class="x" style="left:800.8px;top:894.47px;font-size:13.7px;line-height:13.7px;color:#333;transform:scaleX(0.9005);">3 days 23:28:25</span>
</div>
<div class="a" style="left:1371px;top:262px;width:8.8px;height:659.8px;background:#e2e2e4;border-radius:4px"></div>
<span class="x" style="left:1411.2px;top:89.72px;font-size:11.2px;line-height:11.2px;color:#222;font-weight:bold;transform:scaleX(0.9918);">Currently selected: 1 Condition</span>
<svg class="a" style="left:1889.5px;top:84.9px" width="6" height="16" viewBox="0 0 6 16" fill="#5a3a86"><circle cx="3" cy="2.6" r="1.8"/><circle cx="3" cy="7.9" r="1.8"/><circle cx="3" cy="13.2" r="1.8"/></svg>
<div class="a" style="left:1393px;top:115.5px;width:516px;height:1.5px;background:#e9e9ec;border-radius:2px"></div>
<svg class="a" style="left:1400px;top:122.5px" width="12" height="8" viewBox="0 0 12 8" fill="none" stroke="#7a49a8" stroke-width="1.3"><path d="M.9 1.2l5 5 5-5"/></svg>
<span class="x" style="left:1430px;top:120.11px;font-size:11.8px;line-height:11.8px;color:#444;transform:scaleX(0.9751);">History</span>
<span class="x" style="left:1403.8px;top:151.59px;font-size:12.3px;line-height:12.3px;color:#666;transform:scaleX(0.8923);">Search Context...</span>
<svg class="a" style="left:1866px;top:149px" width="19" height="18" viewBox="0 0 19 18" fill="none" stroke="#666" stroke-width="1.3"><circle cx="8" cy="7.6" r="5.7"/><path d="M12.2 11.8l4.6 4"/></svg>
<svg class="a" style="left:1892.5px;top:151px" width="14" height="13" viewBox="0 0 14 13" fill="none" stroke="#7a49a8" stroke-width="1.3"><path d="M1.4 1.3h11.2L8.4 6.6v3.2l-2.8 1.8V6.6z" stroke-linejoin="round"/></svg>
<div class="a" style="left:1396px;top:184.2px;width:512px;height:39.5px;background:#e2e2e4;border-radius:2px"></div>
<span class="x" style="left:1403.6px;top:189.77px;font-size:10.2px;line-height:10.2px;color:#333;font-style:italic;transform:scaleX(0.8085);">Today at 11:35 AM</span>
<span class="x" style="left:1403.8px;top:203.9px;font-size:10.4px;line-height:10.4px;color:#333;transform:scaleX(0.8702);">Chris Orr</span>
<span class="x" style="left:1619.8px;top:196.43px;font-size:13.2px;line-height:13.2px;color:#9a52d6;font-weight:bold;transform:scaleX(1.0361);">Condition</span>
<svg class="a" style="left:1880px;top:193.8px" width="15" height="14" viewBox="0 0 15 14"><path d="M1.3 .2v13.6" stroke="#b8525d" stroke-width="1.7" fill="none"/><path d="M2 .9c2.3-.9 4.2-.4 6.2.1s3.9.6 6.3-.5v7.7c-2.4 1.1-4.3 1-6.3.500s-3.9-1-6.2-.1z" fill="#b8525d"/></svg>
<div class="a" style="left:1401px;top:778px;width:43px;height:37px;border:1px solid #7a6c9c;border-radius:3.5px"></div>
<svg class="a" style="left:1415.6px;top:783.1px" width="10.8" height="10.1" viewBox="0 0 15 14"><path d="M1.3 .2v13.6" stroke="#2e2e2e" stroke-width="1.7" fill="none"/><path d="M2 .9c2.3-.9 4.2-.4 6.2.1s3.9.6 6.3-.5v7.7c-2.4 1.1-4.3 1-6.3.500s-3.9-1-6.2-.1z" fill="#2e2e2e"/></svg>
<span class="x" style="left:1409.8px;top:798.19px;font-size:9.7px;line-height:9.7px;color:#333;transform:scaleX(0.9273);">Unflag</span>
<svg class="a" style="left:1462.5px;top:783.3px" width="10.8" height="9.4" viewBox="0 0 15 13"><path d="M1.2 7.2l3.9 4L13.8 1.4" stroke="#2e2e2e" stroke-width="2.2" fill="none"/></svg>
<span class="x" style="left:1455.9px;top:798.19px;font-size:9.7px;line-height:9.7px;color:#333;transform:scaleX(0.8647);">Review</span>
<svg class="a" style="left:1507.5px;top:782.5px" width="11" height="11" viewBox="0 0 11 11" fill="#2e2e2e"><path d="M.5.6h4l4.6 4.6a.9.9 0 0 1 0 1.3L6.4 9.2a.9.9 0 0 1-1.3 0L.5 4.6z"/><path d="M6.2.600L10.7 5.1a1.2 1.2 0 0 1 0 1.7L7.6 9.9l-.6-.600 3-3a.7.7 0 0 0 0-.900L5.3.600z"/><circle cx="2.3" cy="2.4" r=".8" fill="#fdfdfd"/></svg>
<span class="x" style="left:1503.8px;top:798.19px;font-size:9.7px;line-height:9.7px;color:#333;transform:scaleX(0.8932);">Label</span>
<svg class="a" style="left:1557px;top:782.5px" width="11" height="11" viewBox="0 0 11 11" fill="#2e2e2e"><path d="M.8.3h9.4v1.5H.8zM.8 9.2h9.4v1.5H.8z"/><path d="M2 1.8h7c0 2-1.5 2.9-2.4 3.7c.9.8 2.4 1.7 2.4 3.7H2c0-2 1.5-2.9 2.4-3.7C3.5 4.7 2 3.8 2 1.8z"/><path d="M3.6 2.9h3.8c-.3.8-1.2 1.3-1.9 1.9c-.7-.6-1.6-1.1-1.9-1.9z" fill="#fdfdfd"/></svg>
<span class="x" style="left:1545.6px;top:798.19px;font-size:9.7px;line-height:9.7px;color:#333;transform:scaleX(0.8785);">Suppress</span>
<div class="a" style="left:1393px;top:815.5px;width:516px;height:1.5px;background:#e6e6ea;border-radius:2px"></div>
<div class="a" style="left:1392px;top:821.8px;width:519.8px;height:67.3px;border:1px solid #e0e0e4;border-radius:3px;background:#fdfdfd"></div>
<span class="x" style="left:1404.5px;top:830.92px;font-size:12.5px;line-height:12.5px;color:#a2a2aa;transform:scaleX(0.9687);">Enter a note by typing here...</span>
<svg class="a" style="left:1903.5px;top:882px" width="7" height="7" viewBox="0 0 7 7" stroke="#8a8a8a" stroke-width=".9" fill="none"><path d="M6.7.600L.6 6.7M6.7 3.6l-3.1 3.1"/></svg>
<div class="a" style="left:1818px;top:894.6px;width:93.4px;height:27.5px;background:#b8a1d5;border-radius:3px"></div>
<span class="x" style="left:1844.8px;top:902.53px;font-size:12.6px;line-height:12.6px;color:#fff;-webkit-text-stroke:0.35px #fff;transform:scaleX(1.0073);">Submit</span>
<svg class="a" style="left:1128px;top:98px" width="14" height="19" viewBox="0 0 14 19" fill="#fff" stroke="#333" stroke-width="1" stroke-linejoin="round"><path d="M2.3 2.2V14.6L5.3 12L7.4 16.5L9.4 15.6L7.3 11.3L11 11Z"/></svg>
<div id="foot"></div>
<div class="a" style="left:0;top:927.5px;width:84.3px;height:23px;background:#08a9f1"></div>
<svg class="a" style="left:9px;top:932.6px" width="13" height="11" viewBox="0 0 13 11" fill="none" stroke="#fff" stroke-width="1.3"><path d="M6.5.800c3.2 0 5.7 1.8 5.7 4.1s-2.5 4.1-5.7 4.1c-.8 0-1.5-.1-2.2-.3L1.5 10.2l.7-2.3C1.3 7.1.800 6.1.800 4.9C.8 2.6 3.3.800 6.5.800z" stroke-linejoin="round"/><circle cx="4.2" cy="4.9" r=".7" fill="#fff" stroke="none"/><circle cx="6.5" cy="4.9" r=".7" fill="#fff" stroke="none"/><circle cx="8.8" cy="4.9" r=".7" fill="#fff" stroke="none"/></svg>
<span class="x" style="left:26.7px;top:933.19px;font-size:11px;line-height:11px;color:#fff;-webkit-text-stroke:0.3px #fff;transform:scaleX(1.004);">Feedback</span>
<span class="x" style="left:94px;top:933.19px;font-size:11px;line-height:11px;color:#6d4a9c;transform:scaleX(0.9904);">2024-12-05-02-56-00.v0</span>
<span class="x" style="left:1733.2px;top:933.22px;font-size:11.2px;line-height:11.2px;color:#6d4a9c;transform:scaleX(0.9829);">Datasources</span>
<span class="x" style="left:1800px;top:931.82px;font-size:12.5px;line-height:12.5px;color:#b4aea6;">|</span>
<span class="x" style="left:1808.2px;top:933.22px;font-size:11.2px;line-height:11.2px;color:#6d4a9c;transform:scaleX(0.9741);">Thread Pool Usage</span>
<div class="a" style="left:0;top:950.3px;width:1916px;height:1.7px;background:linear-gradient(#f0dcae,#c6b084)"></div><div class="a" style="left:0;top:950.3px;width:84px;height:1.7px;background:#72b0ac"></div><div class="a" style="left:84px;top:927.5px;width:1.5px;height:23px;background:#d8f4fb"></div>
</body></html>
